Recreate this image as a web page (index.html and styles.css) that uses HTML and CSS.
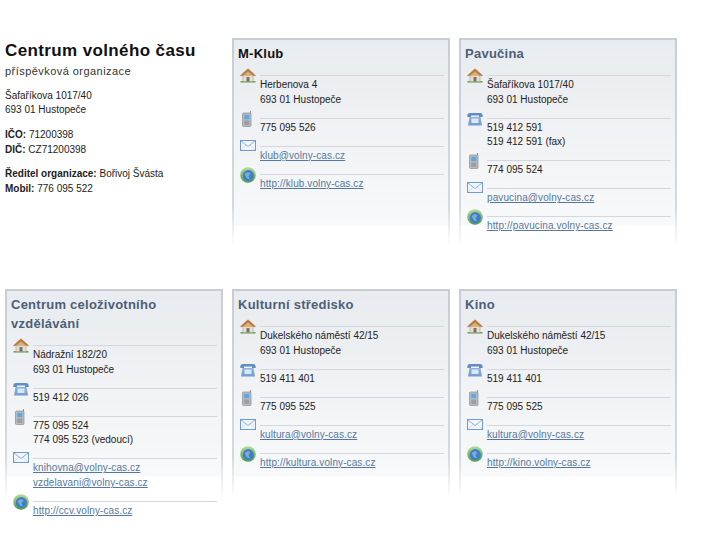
FILE: index.html
```html
<!DOCTYPE html>
<html lang="cs">
<head>
<meta charset="utf-8">
<title>Centrum volného času</title>
<link rel="stylesheet" href="styles.css">
</head>
<body>
<svg class="defs" width="0" height="0" aria-hidden="true">
  <defs>
    <linearGradient id="gGlobe" x1="0" y1="0" x2="0" y2="1"><stop offset="0" stop-color="#b5dc9c"/><stop offset="1" stop-color="#4f9c48"/></linearGradient>
    <linearGradient id="gPhone" x1="0" y1="0" x2="0" y2="1"><stop offset="0" stop-color="#8fb4dc"/><stop offset="1" stop-color="#6f9ccf"/></linearGradient>
    <symbol id="i-home" viewBox="0 0 16 16">
      <rect x="0.5" y="13" width="15" height="1.6" fill="#6fa85a"/>
      <rect x="3" y="7" width="10" height="6.5" fill="#e6e0d2" stroke="#a89f8c" stroke-width=".6"/>
      <rect x="6.5" y="9" width="3" height="4.5" fill="#77736a"/>
      <path d="M3 7 L8 3.2 L13 7 L13 8 L3 8 Z" fill="#d9b27a"/>
      <path d="M0.5 7.6 L8 .8 L15.5 7.6 L13.5 7.6 L8 3.2 L2.5 7.6 Z" fill="#c07a38" stroke="#a5662b" stroke-width=".5"/>
    </symbol>
    <symbol id="i-mobile" viewBox="0 0 16 16">
      <rect x="10" y="0" width="1" height="3" fill="#8b8f94"/>
      <rect x="2.5" y="2" width="8.5" height="13.5" rx="1" fill="#b9bdc1" stroke="#898d92" stroke-width=".7"/>
      <rect x="4.2" y="3.8" width="5" height="4.4" fill="#5aa8e6"/>
      <rect x="4.2" y="9.5" width="5" height="4.5" fill="#9a9fa4"/>
    </symbol>
    <symbol id="i-mail" viewBox="0 0 16 16">
      <rect x=".5" y="1.5" width="15" height="10" fill="#f2f6fb" stroke="#6f9bd0"/>
      <path d="M1 2 L8 7.5 L15 2" fill="none" stroke="#8db1dc"/>
      <path d="M1 11 L6 6 M15 11 L10 6" fill="none" stroke="#c3d5ea" stroke-width=".7"/>
    </symbol>
    <symbol id="i-web" viewBox="0 0 16 16">
      <circle cx="8" cy="8" r="7.8" fill="url(#gGlobe)"/>
      <circle cx="8.3" cy="8.6" r="5.6" fill="#3f7fc4"/>
      <path d="M4.5 7 L8 5 L10.5 6.5 L8.5 9 L10 12.5 L7 11.5 Z" fill="#7fa9d6"/>
    </symbol>
    <symbol id="i-phone" viewBox="0 0 16 16">
      <path d="M.3 5 Q.3 2 3 2 L13 2 Q15.7 2 15.7 5 L15.7 6 L12 6 L12 4.5 L4 4.5 L4 6 L.3 6 Z" fill="#5f8ec4"/>
      <path d="M2.5 6 L13.5 6 L15 14.5 L1 14.5 Z" fill="url(#gPhone)"/>
      <rect x="4.5" y="7.5" width="7" height="4.5" fill="#dbe7f4"/>
    </symbol>
  </defs>
</svg>
<main class="grid">
  <section class="intro">
    <h1>Centrum volného času</h1>
    <p class="sub">příspěvková organizace</p>
    <p>Šafaříkova 1017/40<br>693 01 Hustopeče</p>
    <p><b>IČO:</b> 71200398<br><b>DIČ:</b> CZ71200398</p>
    <p><b>Ředitel organizace:</b> Bořivoj Švásta<br><b>Mobil:</b> 776 095 522</p>
  </section>

  <article class="card">
    <h2 class="dark">M-Klub</h2>
    <div class="row"><svg class="ico"><use href="#i-home"/></svg><div class="txt">Herbenova 4<br>693 01 Hustopeče</div></div>
    <div class="row"><svg class="ico"><use href="#i-mobile"/></svg><div class="txt">775 095 526</div></div>
    <div class="row"><svg class="ico"><use href="#i-mail"/></svg><div class="txt"><a href="#">klub@volny-cas.cz</a></div></div>
    <div class="row"><svg class="ico"><use href="#i-web"/></svg><div class="txt"><a href="#">http://klub.volny-cas.cz</a></div></div>
  </article>

  <article class="card">
    <h2>Pavučina</h2>
    <div class="row"><svg class="ico"><use href="#i-home"/></svg><div class="txt">Šafaříkova 1017/40<br>693 01 Hustopeče</div></div>
    <div class="row"><svg class="ico"><use href="#i-phone"/></svg><div class="txt">519 412 591<br>519 412 591 (fax)</div></div>
    <div class="row"><svg class="ico"><use href="#i-mobile"/></svg><div class="txt">774 095 524</div></div>
    <div class="row"><svg class="ico"><use href="#i-mail"/></svg><div class="txt"><a href="#">pavucina@volny-cas.cz</a></div></div>
    <div class="row"><svg class="ico"><use href="#i-web"/></svg><div class="txt"><a href="#">http://pavucina.volny-cas.cz</a></div></div>
  </article>

  <article class="card">
    <h2>Centrum celoživotního vzdělávání</h2>
    <div class="row"><svg class="ico"><use href="#i-home"/></svg><div class="txt">Nádražní 182/20<br>693 01 Hustopeče</div></div>
    <div class="row"><svg class="ico"><use href="#i-phone"/></svg><div class="txt">519 412 026</div></div>
    <div class="row"><svg class="ico"><use href="#i-mobile"/></svg><div class="txt">775 095 524<br>774 095 523 (vedoucí)</div></div>
    <div class="row"><svg class="ico"><use href="#i-mail"/></svg><div class="txt"><a href="#">knihovna@volny-cas.cz</a><br><a href="#">vzdelavani@volny-cas.cz</a></div></div>
    <div class="row"><svg class="ico"><use href="#i-web"/></svg><div class="txt"><a href="#">http://ccv.volny-cas.cz</a></div></div>
  </article>

  <article class="card">
    <h2>Kulturní středisko</h2>
    <div class="row"><svg class="ico"><use href="#i-home"/></svg><div class="txt">Dukelského náměstí 42/15<br>693 01 Hustopeče</div></div>
    <div class="row"><svg class="ico"><use href="#i-phone"/></svg><div class="txt">519 411 401</div></div>
    <div class="row"><svg class="ico"><use href="#i-mobile"/></svg><div class="txt">775 095 525</div></div>
    <div class="row"><svg class="ico"><use href="#i-mail"/></svg><div class="txt"><a href="#">kultura@volny-cas.cz</a></div></div>
    <div class="row"><svg class="ico"><use href="#i-web"/></svg><div class="txt"><a href="#">http://kultura.volny-cas.cz</a></div></div>
  </article>

  <article class="card">
    <h2>Kino</h2>
    <div class="row"><svg class="ico"><use href="#i-home"/></svg><div class="txt">Dukelského náměstí 42/15<br>693 01 Hustopeče</div></div>
    <div class="row"><svg class="ico"><use href="#i-phone"/></svg><div class="txt">519 411 401</div></div>
    <div class="row"><svg class="ico"><use href="#i-mobile"/></svg><div class="txt">775 095 525</div></div>
    <div class="row"><svg class="ico"><use href="#i-mail"/></svg><div class="txt"><a href="#">kultura@volny-cas.cz</a></div></div>
    <div class="row"><svg class="ico"><use href="#i-web"/></svg><div class="txt"><a href="#">http://kino.volny-cas.cz</a></div></div>
  </article>
</main>
</body>
</html>
```
FILE: styles.css
```css
html, body {
  margin: 0;
  padding: 0;
  background: #fff;
}
body {
  font-family: "Liberation Sans", Arial, sans-serif;
  font-size: 10px;
  line-height: 14.7px;
  color: #222;
}
.defs {
  display: block;
  height: 0;
}
.grid {
  display: grid;
  grid-template-columns: repeat(3, 218px);
  grid-auto-rows: min-content;
  column-gap: 9px;
  row-gap: 43px;
  padding: 38px 0 0 5px;
}
.intro {
  min-height: 208px;
}
.intro h1 {
  margin: 3px 0 0;
  font-size: 17px;
  line-height: 20px;
  font-weight: bold;
  letter-spacing: .38px;
  color: #111;
}
.intro p {
  margin: 9.8px 0 0;
}
.intro p.sub {
  margin: 3px 0 10px;
  font-size: 11px;
  letter-spacing: .45px;
  color: #333;
}
.card {
  box-sizing: border-box;
  min-height: 208px;
  padding: 4px 6px 0 8px;
  border-top: 2px solid #c9cdd3;
  background-color: #fff;
  background-image:
    linear-gradient(#c9cdd3, #d6d9dd 80%, #fff),
    linear-gradient(#c9cdd3, #d6d9dd 80%, #fff),
    linear-gradient(#e8ebef, #f8f9fa 185px, #fff 186px);
  background-size: 2px 207px, 2px 207px, 100% 207px;
  background-position: left top, right top, left top;
  background-repeat: no-repeat;
}
.card h2 {
  margin: 0 0 5px -2px;
  font-size: 13px;
  line-height: 19px;
  font-weight: bold;
  color: #4c5f78;
  letter-spacing: .25px;
}
.card h2.dark {
  color: #111;
}
.row {
  display: flex;
  align-items: flex-start;
  padding-bottom: 3.3px;
}
.ico {
  flex: none;
  width: 16px;
  height: 16px;
  margin-right: 4px;
}
.txt {
  flex: 1;
  margin-top: 7px;
  padding-top: 2px;
  border-top: 1px solid #d4d7dc;
  font-size: 10px;
}
a {
  color: #56789f;
  text-decoration: underline;
  letter-spacing: .1px;
}
```
